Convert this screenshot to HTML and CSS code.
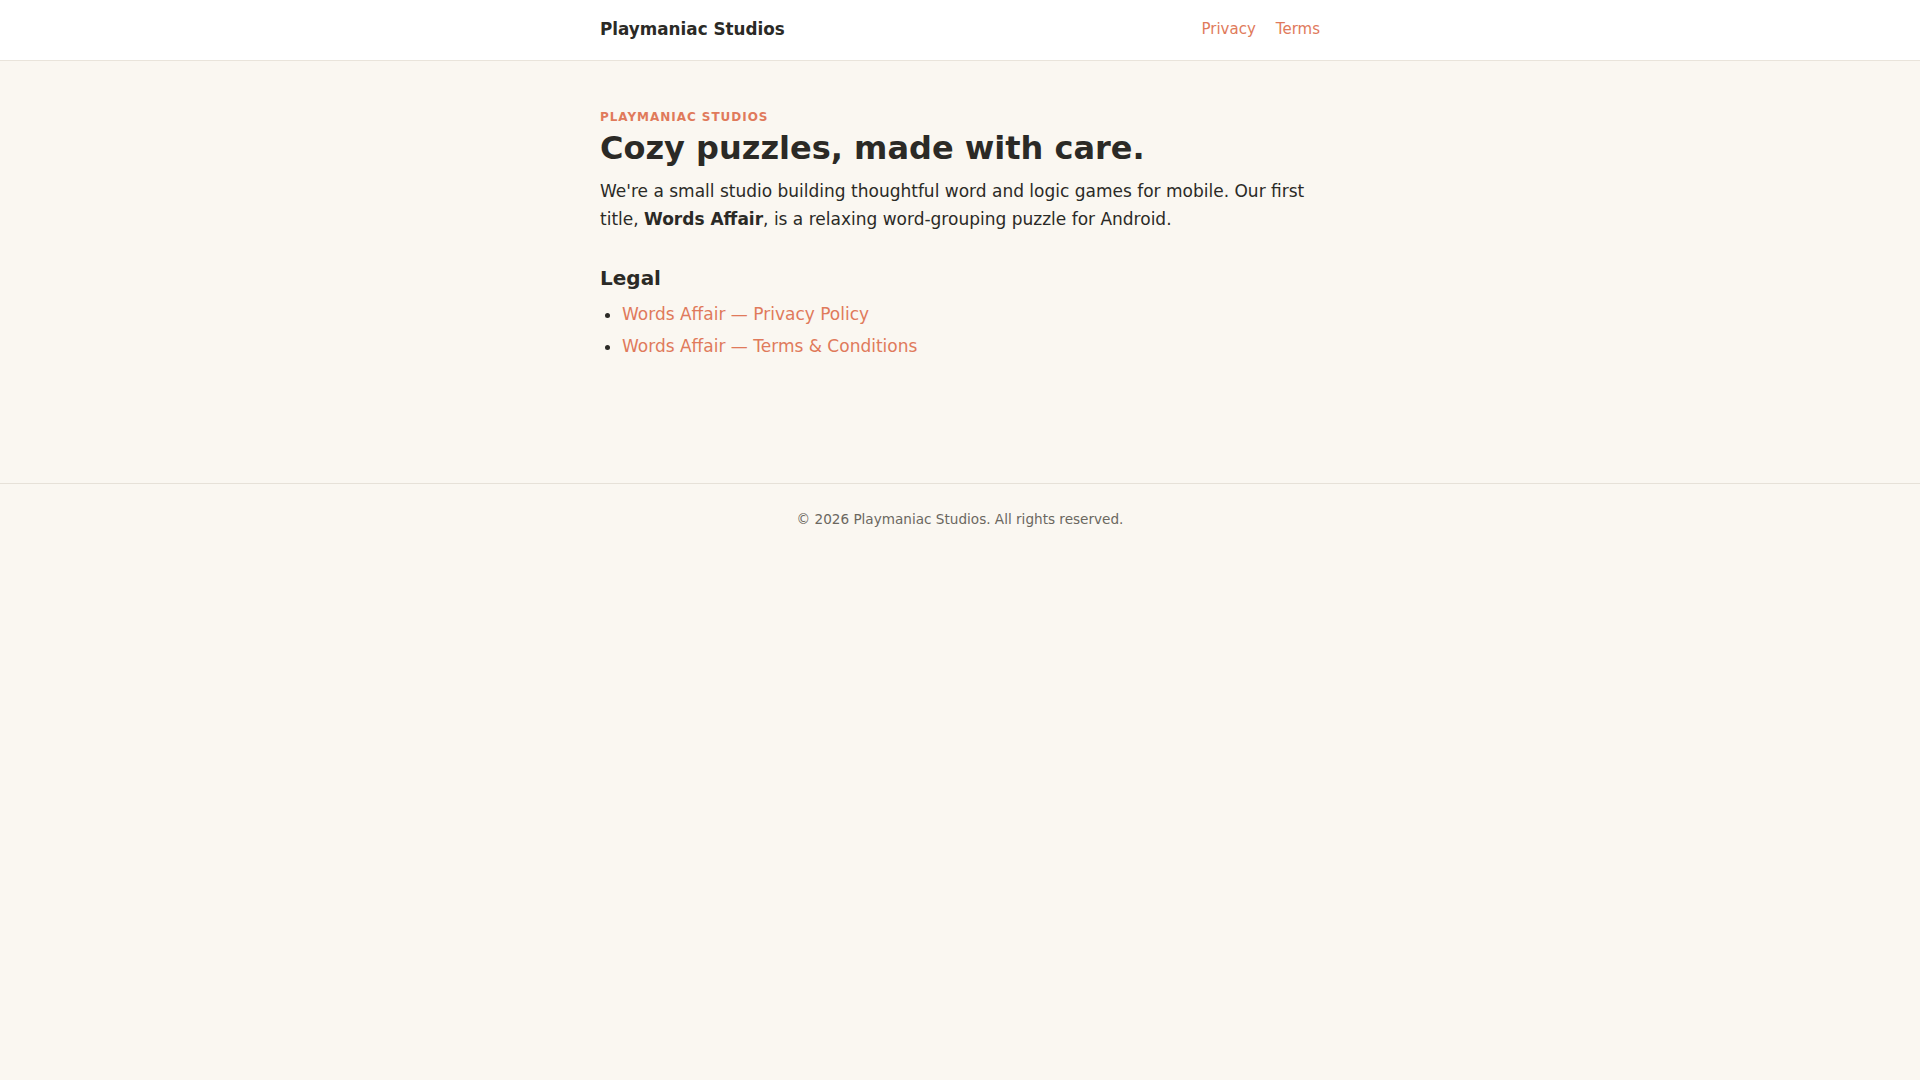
FILE: index.html
```html
<!DOCTYPE html>
<html lang="en">
<head>
<meta charset="utf-8">
<title>Playmaniac Studios</title>
<link rel="stylesheet" href="styles.css">
</head>
<body>
<header class="site-header">
  <div class="container header-inner">
    <a class="brand" href="#">Playmaniac Studios</a>
    <nav class="nav">
      <a href="#">Privacy</a>
      <a href="#">Terms</a>
    </nav>
  </div>
</header>
<main class="container main">
  <p class="eyebrow">Playmaniac Studios</p>
  <h1 class="title">Cozy puzzles, made with care.</h1>
  <p class="lead">We're a small studio building thoughtful word and logic games for mobile. Our first title, <strong>Words Affair</strong>, is a relaxing word-grouping puzzle for Android.</p>
  <h2 class="section-title">Legal</h2>
  <ul class="links">
    <li><a href="#">Words Affair — Privacy Policy</a></li>
    <li><a href="#">Words Affair — Terms &amp; Conditions</a></li>
  </ul>
</main>
<footer class="site-footer">
  <p>© 2026 Playmaniac Studios. All rights reserved.</p>
</footer>
</body>
</html>
```
FILE: styles.css
```css
html, body {
  margin: 0;
  padding: 0;
}
body {
  background: #faf7f1;
  color: #2b2a26;
  font-family: "DejaVu Sans", sans-serif;
  font-size: 17px;
  line-height: 1.62;
}
a {
  color: #e07a5b;
  text-decoration: none;
}
.container {
  max-width: 720px;
  margin: 0 auto;
}
.site-header {
  background: #ffffff;
  border-bottom: 1px solid #e9e4db;
}
.header-inner {
  height: 60px;
  display: flex;
  align-items: center;
  justify-content: space-between;
}
.brand {
  color: #2b2a26;
  font-weight: bold;
  font-size: 16.8px;
}
.nav {
  display: flex;
  gap: 20px;
  font-size: 15px;
  line-height: 1.4;
  padding-bottom: 2px;
}
.main {
  padding: 48px 0 119px;
}
.eyebrow {
  margin: 0;
  color: #e07a5b;
  font-size: 12px;
  font-weight: bold;
  letter-spacing: 0.08em;
  text-transform: uppercase;
  line-height: 1.4;
}
.title {
  margin: 3px 0 11px;
  font-size: 32px;
  line-height: 1.2;
}
.lead {
  margin: 0;
}
.section-title {
  margin: 32px 0 10px;
  font-size: 20px;
  line-height: 1.3;
}
.links {
  margin: 0;
  padding-left: 22px;
}
.links li {
  margin-bottom: 4px;
}
.site-footer {
  border-top: 1px solid #e6e1d8;
  text-align: center;
  color: #6b675f;
  font-size: 13.6px;
}
.site-footer p {
  margin: 0;
  padding: 24px 0;
}
```
